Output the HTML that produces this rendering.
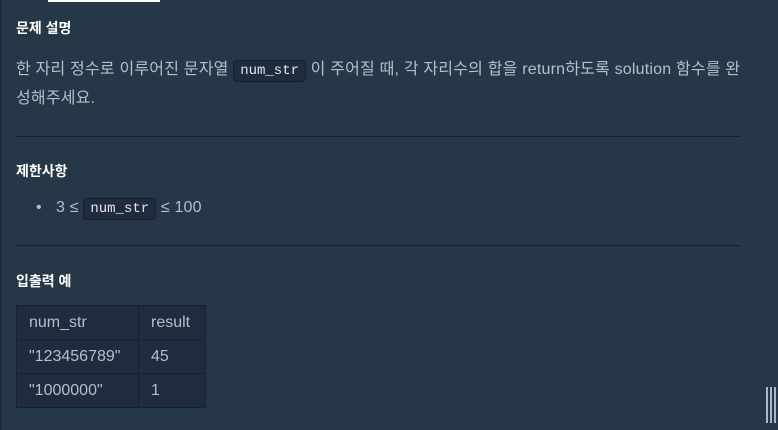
<!DOCTYPE html>
<html><head><meta charset="utf-8"><style>
html,body{margin:0;padding:0;}
body{width:778px;height:430px;background:#263747;position:relative;overflow:hidden;font-family:"Liberation Sans","Noto Sans CJK KR",sans-serif;color:#b2c0cc;}
.lb{position:absolute;left:0;top:0;width:2px;height:430px;background:#1f2b38;}
.topbar{position:absolute;left:48px;top:0;width:112px;height:2px;background:#fff;}
h5{position:absolute;left:16px;margin:0;font-size:14px;font-weight:bold;color:#fff;line-height:20px;}
.p{position:absolute;left:16px;font-size:16px;line-height:28px;width:740px;letter-spacing:0.2px;}
code{font-family:"Liberation Mono",monospace;font-size:14px;letter-spacing:0;background:#202b3d;border:1px solid #172030;border-radius:4px;padding:2px 6px;color:#dfe6ec;}
.hr{position:absolute;left:16px;width:724px;height:1px;background:#172130;}
table{position:absolute;left:16px;top:305px;border-collapse:collapse;font-size:16px;}
td{background:#202b3d;border:1px solid #172130;height:33px;padding:0 12px;color:#b2c0cc;}
.sb{position:absolute;top:387px;width:2px;height:36px;background:#a8b8c6;}
</style></head><body>
<div class="lb"></div><div class="topbar"></div>
<h5 style="top:18px">문제 설명</h5>
<div class="p" style="top:56px">한 자리 정수로 이루어진 문자열 <code>num_str</code> 이 주어질 때, 각 자리수의 합을 return하도록 solution 함수를 완<br>성해주세요.</div>
<div class="hr" style="top:136px"></div>
<h5 style="top:161px">제한사항</h5>
<div class="p" style="top:194px;left:36px"><span style="position:absolute;left:0;font-size:16px">•</span><span style="position:absolute;left:20px;white-space:nowrap">3 ≤ <code>num_str</code> ≤ 100</span></div>
<div class="hr" style="top:245px"></div>
<h5 style="top:271px">입출력 예</h5>
<table>
<tr><td style="width:97px">num_str</td><td style="width:42px">result</td></tr>
<tr><td>"123456789"</td><td>45</td></tr>
<tr><td>"1000000"</td><td>1</td></tr>
</table>
<div class="sb" style="left:766px"></div><div class="sb" style="left:770px"></div><div class="sb" style="left:774px"></div>
</body></html>
